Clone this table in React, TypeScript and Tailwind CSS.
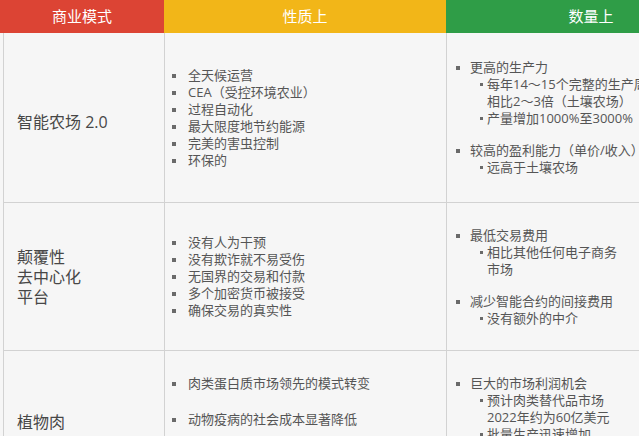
import React from 'react'

type SubItem = string[]
type Group = { title: string; subs: SubItem[] }

type Row = {
  label: string[]
  labelOffset: string
  height: string
  align: 'center' | 'top'
  traits: string[]
  traitGap: string
  groups: Group[]
}

const rows: Row[] = [
  {
    label: ['智能农场 2.0'],
    labelOffset: 'mt-[8px]',
    height: 'h-[170px]',
    align: 'center',
    traits: ['全天候运营', 'CEA（受控环境农业）', '过程自动化', '最大限度地节约能源', '完美的害虫控制', '环保的'],
    traitGap: 'gap-0',
    groups: [
      {
        title: '更高的生产力',
        subs: [['每年14～15个完整的生产周期', '相比2～3倍（土壤农场）'], ['产量增加1000%至3000%']],
      },
      { title: '较高的盈利能力（单价/收入）', subs: [['远高于土壤农场']] },
    ],
  },
  {
    label: ['颠覆性', '去中心化', '平台'],
    labelOffset: '',
    height: 'h-[148px]',
    align: 'center',
    traits: ['没有人为干预', '没有欺诈就不易受伤', '无国界的交易和付款', '多个加密货币被接受', '确保交易的真实性'],
    traitGap: 'gap-0',
    groups: [
      { title: '最低交易费用', subs: [['相比其他任何电子商务', '市场']] },
      { title: '减少智能合约的间接费用', subs: [['没有额外的中介']] },
    ],
  },
  {
    label: ['植物肉'],
    labelOffset: '',
    height: 'h-[142px]',
    align: 'top',
    traits: ['肉类蛋白质市场领先的模式转变', '动物疫病的社会成本显著降低'],
    traitGap: 'gap-[19px]',
    groups: [
      {
        title: '巨大的市场利润机会',
        subs: [['预计肉类替代品市场', '2022年约为60亿美元'], ['批量生产迅速增加']],
      },
    ],
  },
]

const Square = () => <span className="mt-[7px] mr-[12px] h-[4px] w-[4px] shrink-0 bg-[#6a6a6a]" />

const TraitList = ({ items, gap }: { items: string[]; gap: string }) => (
  <ul className={`flex flex-col ${gap}`}>
    {items.map((t) => (
      <li key={t} className="flex items-start whitespace-nowrap">
        <Square />
        <span>{t}</span>
      </li>
    ))}
  </ul>
)

const GroupList = ({ groups }: { groups: Group[] }) => (
  <div className="flex flex-col gap-[15px]">
    {groups.map((g) => (
      <div key={g.title}>
        <div className="flex items-start whitespace-nowrap">
          <span className="mt-[7px] mr-[10px] h-[4px] w-[4px] shrink-0 bg-[#6a6a6a]" />
          <span>{g.title}</span>
        </div>
        {g.subs.map((s) => (
          <div key={s[0]} className="ml-[24px] flex items-start whitespace-nowrap">
            <span className="mt-[7px] mr-[4px] h-[3px] w-[3px] shrink-0 bg-[#6a6a6a]" />
            <span>
              {s.map((line, i) => (
                <React.Fragment key={line}>
                  {i > 0 && <br />}
                  {line}
                </React.Fragment>
              ))}
            </span>
          </div>
        ))}
      </div>
    ))}
  </div>
)

export default function App() {
  return (
    <div
      className="h-[436px] w-[639px] overflow-hidden bg-[#f6f6f6]"
      style={{ fontFamily: '"Open Sans", "Noto Sans CJK SC", sans-serif' }}
    >
      <div className="w-[736px]">
        <div className="grid h-[33px] grid-cols-[164px_282px_290px] text-[15px] text-white">
          <div className="flex items-center justify-center bg-[#dc4434]">商业模式</div>
          <div className="flex items-center justify-center bg-[#f2b618]">性质上</div>
          <div className="flex items-center justify-center bg-[#2f9d47]">数量上</div>
        </div>
        <div className="ml-[3px] border-l border-[#d2d2d2]">
          {rows.map((r) => (
            <div key={r.label[0]} className={`grid ${r.height} grid-cols-[160px_282px_290px] border-b border-[#d2d2d2]`}>
              <div className="flex items-center pl-[13px] text-[16px] leading-[20px] text-[#474747]">
                <div className={r.labelOffset}>
                  {r.label.map((l) => (
                    <div key={l}>{l}</div>
                  ))}
                </div>
              </div>
              <div
                className={`flex border-l border-[#d2d2d2] pl-[7px] text-[13px] leading-[17px] text-[#555] ${
                  r.align === 'top' ? 'items-start pt-[24px]' : 'items-center'
                }`}
              >
                <TraitList items={r.traits} gap={r.traitGap} />
              </div>
              <div
                className={`flex border-l border-[#d2d2d2] pl-[9px] text-[13px] leading-[17px] text-[#555] ${
                  r.align === 'top' ? 'items-start pt-[24px]' : 'items-center'
                }`}
              >
                <GroupList groups={r.groups} />
              </div>
            </div>
          ))}
        </div>
      </div>
    </div>
  )
}
